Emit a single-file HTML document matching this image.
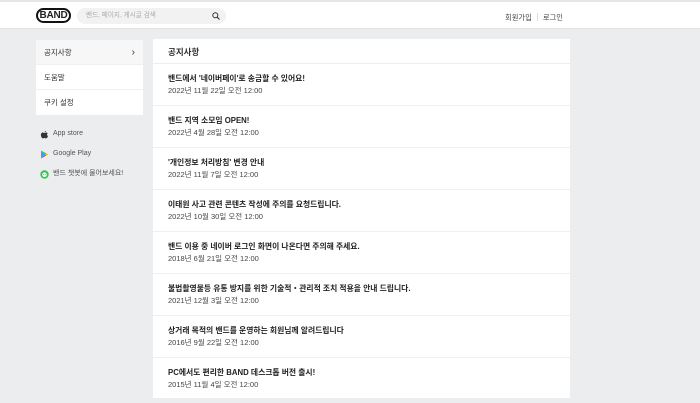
<!DOCTYPE html>
<html><head><meta charset="utf-8"><style>
*{margin:0;padding:0;box-sizing:border-box}
body{width:700px;height:403px;overflow:hidden;background:#ecedef;font-family:"Liberation Sans","Noto Sans CJK KR",sans-serif;color:#222;position:relative}
.top{position:absolute;left:0;top:0;width:700px;height:29px;background:#fff;border-top:2px solid #e6e6e6;border-bottom:1px solid #e2e2e2}
.logo{position:absolute;left:36px;top:6px;width:35px;height:15px;border:2px solid #111;border-radius:8px;font-weight:bold;font-size:10px;line-height:11px;text-align:center;letter-spacing:-.2px}
.search{position:absolute;left:77px;top:6px;width:149px;height:16px;background:#f2f2f3;border-radius:8px;font-size:6.6px;color:#aaa;line-height:16px;padding-left:9px}
.search svg{position:absolute;right:6px;top:4px}
.links{position:absolute;left:505px;top:11px;font-size:7.3px;color:#444}
.links span.sep{display:inline-block;width:1px;height:8px;background:#ddd;margin:0 5px;vertical-align:-1px}
.side{position:absolute;left:36px;top:40px;width:107px;background:#fff}
.side div{height:25px;line-height:25px;font-size:7.5px;padding-left:8px;color:#333;border-bottom:1px solid #f0f0f0;position:relative}
.side div.on{background:#f7f7f7}
.side div.on:after{content:"›";position:absolute;right:8px;top:0;font-size:10px}
.apps{position:absolute;left:40px;top:124px;font-size:7px;color:#555}
.apps p{height:20px;line-height:12px;display:flex;align-items:center}
.apps i{display:inline-block;width:9px;height:9px;margin-right:4px}
.main{position:absolute;left:153px;top:39px;width:417px;height:359px;background:#fff}
.main h1{font-size:8.5px;font-weight:bold;color:#333;height:25px;line-height:26px;padding-left:15px;border-bottom:1px solid #eee}
.it{height:42px;border-bottom:1px solid #f0f0f0;padding:9px 0 0 15px}
.it b{display:block;font-size:7.8px;color:#222;line-height:12px}
.it span{display:block;font-size:7.5px;color:#444;line-height:11px}
</style></head><body>
<div class="top">
<div class="logo">BAND</div>
<div class="search">밴드, 페이지, 게시글 검색<svg width="8" height="8" viewBox="0 0 8 8"><circle cx="3.3" cy="3.3" r="2.5" fill="none" stroke="#333" stroke-width="1"/><path d="M5.2 5.2L7.5 7.5" stroke="#333" stroke-width="1.1"/></svg></div>
<div class="links">회원가입<span class="sep"></span>로그인</div>
</div>
<div class="side"><div class="on">공지사항</div><div>도움말</div><div style="border:none">쿠키 설정</div></div>
<div class="apps">
<p><i><svg width="9" height="9" viewBox="0 0 9 9"><path d="M4.5 2.3C5 1 6 .8 6 .8 6 1.8 5.2 2.4 4.5 2.3ZM2.3 2.6C3.3 2.4 3.9 3 4.5 3S5.8 2.4 6.8 2.6C7.4 2.8 7.8 3.3 7.8 3.3 6.7 4 6.9 5.6 8 6 7.6 7.2 6.9 8.4 6.1 8.4 5.4 8.4 5.2 8 4.5 8S3.5 8.4 2.9 8.4C2 8.4.8 6.4.9 4.6 1 3.4 1.6 2.7 2.3 2.6Z" fill="#333"/></svg></i>App store</p>
<p><i><svg width="9" height="9" viewBox="0 0 9 9"><path d="M1 .5L5 4.5 1 8.5Z" fill="#2aa7f0"/><path d="M1 .5L6.5 3.5 5 4.5Z" fill="#34c26b"/><path d="M1 8.5L6.5 5.5 5 4.5Z" fill="#f0434e"/><path d="M6.5 3.5L8.3 4.5 6.5 5.5 5 4.5Z" fill="#fbbc05"/></svg></i>Google Play</p>
<p><i><svg width="9" height="9" viewBox="0 0 9 9"><circle cx="4.5" cy="4.5" r="4.2" fill="#2fc94e"/><circle cx="4.5" cy="4.7" r="2.3" fill="#fff"/><circle cx="3.7" cy="4.6" r=".5" fill="#2fc94e"/><circle cx="5.3" cy="4.6" r=".5" fill="#2fc94e"/></svg></i>밴드 챗봇에 물어보세요!</p>
</div>
<div class="main">
<h1>공지사항</h1>
<div class="it"><b>밴드에서 '네이버페이'로 송금할 수 있어요!</b><span>2022년 11월 22일 오전 12:00</span></div>
<div class="it"><b>밴드 지역 소모임 OPEN!</b><span>2022년 4월 28일 오전 12:00</span></div>
<div class="it"><b>'개인정보 처리방침' 변경 안내</b><span>2022년 11월 7일 오전 12:00</span></div>
<div class="it"><b>이태원 사고 관련 콘텐츠 작성에 주의를 요청드립니다.</b><span>2022년 10월 30일 오전 12:00</span></div>
<div class="it"><b>밴드 이용 중 네이버 로그인 화면이 나온다면 주의해 주세요.</b><span>2018년 6월 21일 오전 12:00</span></div>
<div class="it"><b>불법촬영물등 유통 방지를 위한 기술적・관리적 조치 적용을 안내 드립니다.</b><span>2021년 12월 3일 오전 12:00</span></div>
<div class="it"><b>상거래 목적의 밴드를 운영하는 회원님께 알려드립니다</b><span>2016년 9월 22일 오전 12:00</span></div>
<div class="it" style="border:none"><b>PC에서도 편리한 BAND 데스크톱 버전 출시!</b><span>2015년 11월 4일 오전 12:00</span></div>
</div>
</body></html>
